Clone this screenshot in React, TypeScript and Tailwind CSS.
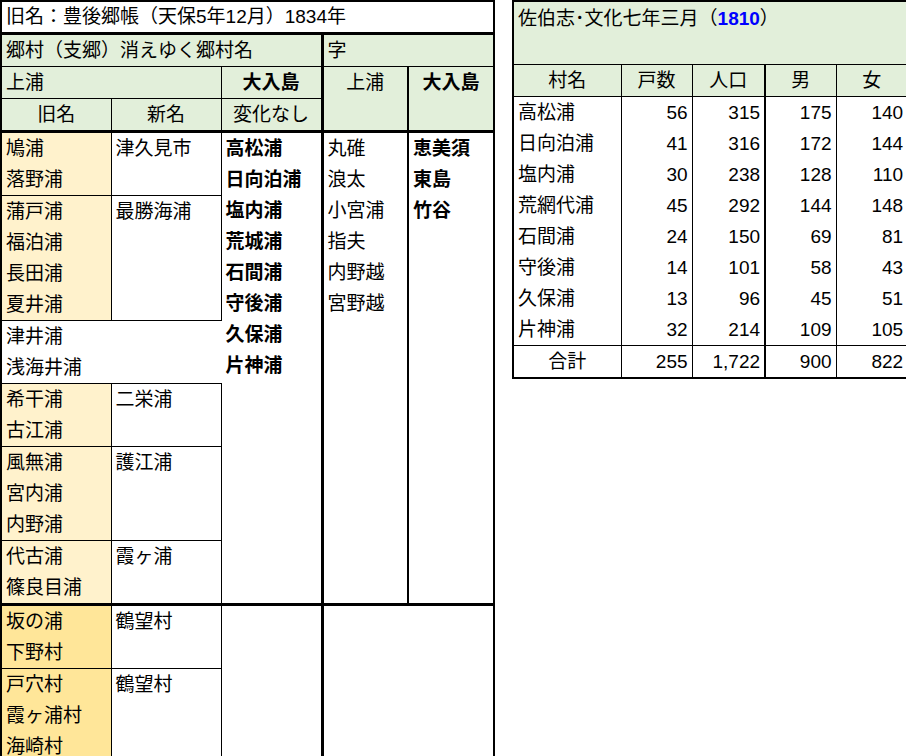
import React from "react";

const F = { fontFamily: '"Liberation Sans", "Noto Sans CJK JP", sans-serif' };
const H = "h-[31px] leading-[31px]";

const col1 = ["鳩浦","落野浦","蒲戸浦","福泊浦","長田浦","夏井浦","津井浦","浅海井浦","希干浦","古江浦","風無浦","宮内浦","内野浦","代古浦","篠良目浦","坂の浦","下野村","戸穴村","霞ヶ浦村","海崎村"];
const groups: { start: number; n: number; name: string | null }[] = [
  { start: 0, n: 2, name: "津久見市" },
  { start: 2, n: 4, name: "最勝海浦" },
  { start: 6, n: 2, name: null },
  { start: 8, n: 2, name: "二栄浦" },
  { start: 10, n: 3, name: "護江浦" },
  { start: 13, n: 2, name: "霞ヶ浦" },
  { start: 15, n: 2, name: "鶴望村" },
  { start: 17, n: 3, name: "鶴望村" },
];
const c3 = ["高松浦","日向泊浦","塩内浦","荒城浦","石間浦","守後浦","久保浦","片神浦"];
const c4 = ["丸碓","浪太","小宮浦","指夫","内野越","宮野越"];
const c5 = ["恵美須","東島","竹谷"];

const right = [
  ["高松浦","56","315","175","140"],
  ["日向泊浦","41","316","172","144"],
  ["塩内浦","30","238","128","110"],
  ["荒網代浦","45","292","144","148"],
  ["石間浦","24","150","69","81"],
  ["守後浦","14","101","58","43"],
  ["久保浦","13","96","45","51"],
  ["片神浦","32","214","109","105"],
];

function List({ items, bold }: { items: string[]; bold?: boolean }) {
  return (
    <div className="flex flex-col">
      {items.map((t) => (
        <div key={t} className={`${H} px-[4px] whitespace-nowrap ${bold ? "font-bold" : ""}`}>{t}</div>
      ))}
    </div>
  );
}

export default function App() {
  const g = "bg-[#e2efda]";
  const rows: React.ReactNode[] = [];
  col1.forEach((name, i) => {
    const grp = groups.find((x) => x.start === i);
    const inGrp = groups.find((x) => i >= x.start && i < x.start + x.n)!;
    const last = i === inGrp.start + inGrp.n - 1;
    const lower = i >= 15;
    const bg = inGrp.name === null ? "bg-white" : lower ? "bg-[#ffe699]" : "bg-[#fff2cc]";
    const bb = last ? (i === 14 ? "border-b-[3px]" : "border-b") : "";
    rows.push(
      <tr key={i}>
        <td colSpan={inGrp.name === null ? 2 : 1} className={`${H} ${bg} ${bb} border-black px-[4px] align-top whitespace-nowrap ${inGrp.name === null ? "" : "border-r"}`}>{name}</td>
        {grp && grp.name !== null && (
          <td rowSpan={grp.n} className={`align-top border-r border-b border-black px-[4px] ${i + grp.n - 1 === 14 ? "border-b-[3px]" : ""}`}>
            <div className={H}>{grp.name}</div>
          </td>
        )}
        {i === 0 && (
          <>
            <td rowSpan={15} className="align-top border-r-[3px] border-b-[3px] border-black p-0"><List items={c3} bold /></td>
            <td rowSpan={15} className="align-top border-r-[2px] border-b-[3px] border-black p-0"><List items={c4} /></td>
            <td rowSpan={15} className="align-top border-b-[3px] border-black p-0"><List items={c5} bold /></td>
          </>
        )}
        {i === 15 && (
          <>
            <td rowSpan={5} className="border-r-[3px] border-black"></td>
            <td rowSpan={5} colSpan={2}></td>
          </>
        )}
      </tr>
    );
  });

  return (
    <div style={F} className="w-[906px] h-[756px] bg-white text-black text-[19px] flex items-start gap-[17px]">
      <table className="table-fixed border-collapse border-2 border-black w-[493px]">
        <colgroup>
          <col className="w-[110px]" />
          <col className="w-[110px]" />
          <col className="w-[101px]" />
          <col className="w-[86px]" />
          <col className="w-[86px]" />
        </colgroup>
        <tbody>
          <tr>
            <td colSpan={5} className="h-[32px] leading-[30px] px-[4px] border-b-[3px] border-black">旧名：豊後郷帳（天保5年12月）1834年</td>
          </tr>
          <tr>
            <td colSpan={3} className={`${H} ${g} px-[4px] border-r-[3px] border-b border-black`}>郷村（支郷）消えゆく郷村名</td>
            <td colSpan={2} className={`${H} ${g} px-[4px] border-b border-black`}>字</td>
          </tr>
          <tr>
            <td colSpan={2} className={`${H} ${g} px-[4px] border-b border-r border-black`}>上浦</td>
            <td className={`${H} ${g} text-center font-bold border-b border-r-[3px] border-black`}>大入島</td>
            <td rowSpan={2} className={`${g} text-center align-top border-r-[2px] border-b-[3px] border-black`}><div className={H}>上浦</div></td>
            <td rowSpan={2} className={`${g} text-center align-top font-bold border-b-[3px] border-black`}><div className={H}>大入島</div></td>
          </tr>
          <tr>
            <td className={`${H} ${g} text-center border-r border-b-[3px] border-black`}>旧名</td>
            <td className={`${H} ${g} text-center border-r border-b-[3px] border-black`}>新名</td>
            <td className={`${H} ${g} text-center border-r-[3px] border-b-[3px] border-black`}>変化なし</td>
          </tr>
          {rows}
        </tbody>
      </table>

      <table className="table-fixed border-collapse border-2 border-black w-[395px]">
        <colgroup>
          <col className="w-[108px]" />
          <col className="w-[71px]" />
          <col className="w-[73px]" />
          <col className="w-[71px]" />
          <col className="w-[72px]" />
        </colgroup>
        <tbody>
          <tr>
            <td colSpan={5} className={`h-[63px] ${g} align-top px-[4px] leading-[34px] border-b border-black`}>
              佐伯志･文化七年三月（<span className="text-[#0000ff] font-bold">1810</span>）
            </td>
          </tr>
          <tr>
            {["村名", "戸数", "人口", "男", "女"].map((h, i) => (
              <td key={h} className={`${H} ${g} text-center border-b border-black ${i === 2 ? "border-r-[2px]" : i < 4 ? "border-r" : ""}`}>{h}</td>
            ))}
          </tr>
          {right.map((r) => (
            <tr key={r[0]}>
              {r.map((v, i) => (
                <td key={i} className={`${H} px-[4px] border-black whitespace-nowrap ${i === 0 ? "text-left" : "text-right"} ${i === 2 ? "border-r-[2px]" : i < 4 ? "border-r" : ""}`}>{v}</td>
              ))}
            </tr>
          ))}
          <tr>
            {["合計", "255", "1,722", "900", "822"].map((v, i) => (
              <td key={i} className={`${H} px-[4px] border-t border-black ${i === 0 ? "text-center" : "text-right"} ${i === 2 ? "border-r-[2px]" : i < 4 ? "border-r" : ""}`}>{v}</td>
            ))}
          </tr>
        </tbody>
      </table>
    </div>
  );
}
